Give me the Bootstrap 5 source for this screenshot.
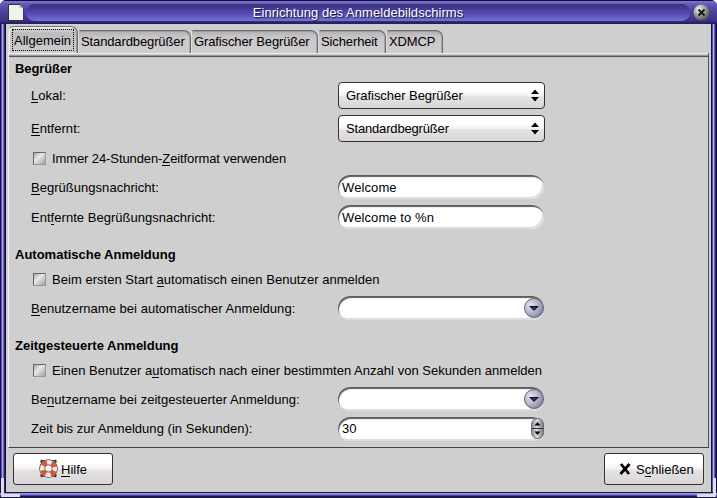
<!DOCTYPE html>
<html lang="de">
<head>
<meta charset="utf-8">
<title>Einrichtung des Anmeldebildschirms</title>
<link rel="stylesheet" href="https://cdn.jsdelivr.net/npm/bootstrap@5.3.0/dist/css/bootstrap.min.css">
<style>
html,body{height:100%}
body{font:13px/15px "Liberation Sans",Arial,sans-serif;letter-spacing:.03px;color:#000;background:#fff;overflow:hidden}
u{text-decoration:none;box-shadow:0 1px 0 #000;display:inline-block;height:14px;line-height:15px}
.win{width:717px;height:498px;background:#17153a;border-radius:6px 6px 0 0;overflow:hidden}
.titlebar{height:25px;padding:0 7px 0 8px;background:linear-gradient(#100c38 0 1px,#7a74cc 1px 2px,#665fc0 3px,#4c44a0 10px,#3c3488 21px,#2a2468 22px,#241e5c 25px)}
.groove{height:17px;line-height:17px;margin-left:2px;margin-right:3px;border-radius:9px;color:#fff;letter-spacing:.05px;text-shadow:1px 1px 1px #111038;background:linear-gradient(#393179,#463d98 30%,#574dba 60%,#7770d0)}
.frame-x{width:6px;background:linear-gradient(90deg,#17153a 0 1px,#5a50b4 1px 2px,#b0acf0 2px 3px,#6a60c8 3px 4px,#2a2468 4px 5px,#141230 5px)}
.frame-y{height:6px;background:linear-gradient(#17153a 0 1px,#9c98e0 1px 2px,#7a74d4 2px 3px,#4c44a8 3px 4px,#1c1848 4px)}
.client{background:#cfcfcf;padding:2px 2px 0 2px}
.tabs{height:27px}
.tb{height:23px;border:1px solid #6e6e6e;border-left-color:#ddd;border-bottom:0;border-radius:3px 7px 0 0;background:linear-gradient(#b2b0b2,#c8c6c8 6px,#cfcdcf);box-shadow:inset 0 1px #9a9a9a,inset -1px 0 #a8a8a8;padding:3px 0 0 2px;letter-spacing:-.12px;white-space:nowrap}
.tb.on{height:27px;border-radius:6px 7px 0 0;background:linear-gradient(#e6e6e6,#bdbbbd 6px,#cfcfcf);padding:2px 3px 0 3px;box-shadow:inset 1px 1px #f2f2f2,inset -1px 0 #999}
.tb.on span{display:block;border:1px dotted #000;height:22px;line-height:21px;padding-left:1px;letter-spacing:0}
.pane{height:395px;border-left:1px solid #f0f0f0;border-right:1px solid #555;border-bottom:1px solid #444;padding:5px 0 0 6px;background:linear-gradient(#efebef 0 1px,#c8c8c8 1px 2px,#999 2px 3px,#555 3px 4px,#c4c4c4 4px 5px,#cfcfcf 5px)}
.r{display:flex;align-items:center;white-space:nowrap}
.r>.lab{width:307px;padding-left:16px}
.chk{width:13px;height:13px;margin:0 6px 0 18px;border:1px solid #666;border-right-color:#999;border-bottom-color:#999;background:linear-gradient(135deg,#a8a8a8,#e8e8e8 40%,#a0a0a0)}
.sel,.pb{border:1px solid #333;border-radius:4px;background:linear-gradient(#fff 0 30%,#f5f1f3 50%,#e6e2e4 55%,#d8d6d8)}
.sel{width:207px;height:27px;margin-left:1px;padding:0 5px 0 7px;letter-spacing:-.05px}
.ent{width:206px;height:24px;border-radius:12px;background:linear-gradient(#fff,#fff);box-shadow:inset 1px 2px 1px #5c5c5c,inset -2px -2px 1px #dcdcdc;padding:0 0 0 4px;letter-spacing:.1px}
.rb{width:20px;height:20px;border-radius:50%;background:radial-gradient(circle at 30% 35%,#e4e4f4,#b4b4cc 45%,#686880 100%);border:1px solid #606070}
.pb{height:32px;width:100px;border-radius:3px}
.h20{height:20px}.h28{height:28px}.h30{height:30px}.h31{height:31px}.h27{height:27px}.h33{height:33px}.h34{height:34px}
.hd{font-weight:700;letter-spacing:0}
.tight{letter-spacing:-.1px}
.tighter{letter-spacing:-.17px}
.gap-a{margin-top:12px}.gap-b{margin-top:13px}
.feet{height:44px;padding:5px 5px 0 5px}
.grip{position:absolute;bottom:1px;width:19px;height:19px;border:3px solid #dcdcec;border-top:0}
.grip.l{left:1px;border-right:0}.grip.rt{right:1px;border-left:0}
</style>
<script src="https://cdn.jsdelivr.net/npm/bootstrap@5.3.0/dist/js/bootstrap.bundle.min.js"></script>
</head>
<body>
<div class="win position-relative d-flex flex-column">
  <header class="titlebar d-flex align-items-center">
    <svg width="16" height="17" viewBox="0 0 16 17"><path d="M.5.5H12l3 3V16.500H.5z" fill="#e8e8e4" stroke="#333"/><path d="M1 1h10v3h4v12H1z" fill="#f2f2ee"/><path d="M11.500 1v3H15z" fill="#bbb"/></svg>
    <div class="groove flex-fill text-center">Einrichtung des Anmeldebildschirms</div>
    <svg width="17" height="17" viewBox="0 0 17 17"><defs><radialGradient id="k" cx=".35" cy=".3" r=".8"><stop offset="0" stop-color="#f4f4f4"/><stop offset=".5" stop-color="#999"/><stop offset="1" stop-color="#444"/></radialGradient></defs><circle cx="8.500" cy="8.500" r="8" fill="url(#k)"/><path d="M5.500 5.500l6 6M11.500 5.500l-6 6" stroke="#111" stroke-width="1.800"/></svg>
  </header>
  <div class="d-flex flex-fill">
    <div class="frame-x"></div>
    <main class="client flex-fill">
      <nav class="tabs d-flex align-items-end">
        <div class="tb on" style="width:70px"><span>Allgemein</span></div>
        <div class="tb" style="width:113px">Standardbegrüßer</div>
        <div class="tb" style="width:127px">Grafischer Begrüßer</div>
        <div class="tb" style="width:68px">Sicherheit</div>
        <div class="tb" style="width:57px">XDMCP</div>
      </nav>
      <section class="pane">
        <div class="r h20 hd tight">Begrüßer</div>
        <div class="r h34"><div class="lab"><u>L</u>okal:</div><div class="sel d-flex align-items-center justify-content-between ms-3">Grafischer Begrüßer<svg width="8" height="13"><path d="M4 0.500L8 5H0zM4 12.500L8 8H0z"/></svg></div></div>
        <div class="r h33"><div class="lab"><u>E</u>ntfernt:</div><div class="sel tighter d-flex align-items-center justify-content-between ms-3">Standardbegrüßer<svg width="8" height="13"><path d="M4 0.500L8 5H0zM4 12.500L8 8H0z"/></svg></div></div>
        <div class="r h27"><i class="chk"></i><span class="tight">Immer 24-Stunden-<u>Z</u>eitformat verwenden</span></div>
        <div class="r h30"><div class="lab"><u>B</u>egrüßungsnachricht:</div><div class="ent d-flex align-items-center ms-3">Welcome</div></div>
        <div class="r h30"><div class="lab">Ent<u>f</u>ernte Begrüßungsnachricht:</div><div class="ent d-flex align-items-center ms-3">Welcome to %n</div></div>
        <div class="r h20 hd gap-a">Automatische Anmeldung</div>
        <div class="r h30"><i class="chk"></i><span>Beim ersten Start <u>a</u>utomatisch einen Benutzer anmelden</span></div>
        <div class="r h28"><div class="lab"><u>B</u>enutzername bei automatischer Anmeldung:</div><div class="ent d-flex align-items-center justify-content-end ms-3"><div class="rb d-flex align-items-center justify-content-center"><svg width="10" height="5"><path d="M0 0h10L5 5z" fill="#111"/><path d="M3 1h4L5 4z" fill="#3a3a90"/></svg></div></div></div>
        <div class="r h20 hd gap-b">Zeitgesteuerte Anmeldung</div>
        <div class="r h30"><i class="chk"></i><span>Einen Benutzer a<u>u</u>tomatisch nach einer bestimmten Anzahl von Sekunden anmelden</span></div>
        <div class="r h28"><div class="lab">Be<u>n</u>utzername bei zeitgesteuerter Anmeldung:</div><div class="ent d-flex align-items-center justify-content-end ms-3"><div class="rb d-flex align-items-center justify-content-center"><svg width="10" height="5"><path d="M0 0h10L5 5z" fill="#111"/><path d="M3 1h4L5 4z" fill="#3a3a90"/></svg></div></div></div>
        <div class="r h31"><div class="lab">Zeit bis zur Anmeldung (in Sekunden):</div><div class="ent d-flex align-items-center justify-content-between ms-3">30<svg width="13" height="21" viewBox="0 0 13 21"><defs><linearGradient id="sp"><stop offset="0" stop-color="#8a8a90"/><stop offset=".45" stop-color="#dcdce4"/><stop offset="1" stop-color="#77777f"/></linearGradient></defs><rect x=".5" y=".5" width="12" height="20" rx="6" fill="url(#sp)" stroke="#66666e"/><path d="M1 10.500h11" stroke="#333"/><path d="M6.500 4L9.500 7.500H3.500zM6.500 17L9.500 13.500H3.500z"/></svg></div></div>
      </section>
      <footer class="feet d-flex justify-content-between">
        <button class="pb d-flex align-items-center p-0" type="button"><svg class="ms-4" width="23" height="20" viewBox="0 0 23 20"><path d="M2.500 2l4 1M2.500 17l4-1M18.500 2l-4 1M18.500 17l-4-1" stroke="#444" stroke-width="3"/><circle cx="10.500" cy="9.500" r="6.300" fill="none" stroke="#444" stroke-width="6"/><circle cx="10.500" cy="9.500" r="6.300" fill="none" stroke="#f4f0ee" stroke-width="4.500"/><circle cx="10.500" cy="9.500" r="6.300" fill="none" stroke="#e8502c" stroke-width="4.500" stroke-dasharray="4.950 4.950" stroke-dashoffset="-2.475"/></svg><span><u>H</u>ilfe</span></button>
        <button class="pb d-flex align-items-center p-0" type="button"><svg style="margin:0 5px 0 14px" width="12" height="12" viewBox="0 0 12 12"><path d="M2 1l8 10M10.500 1L1.500 11" stroke="#000" stroke-width="2.800"/></svg><span>S<u>c</u>hließen</span></button>
      </footer>
    </main>
    <div class="frame-x"></div>
  </div>
  <div class="frame-y"></div>
  <i class="grip l"></i><i class="grip rt"></i>
</div>
</body>
</html>
